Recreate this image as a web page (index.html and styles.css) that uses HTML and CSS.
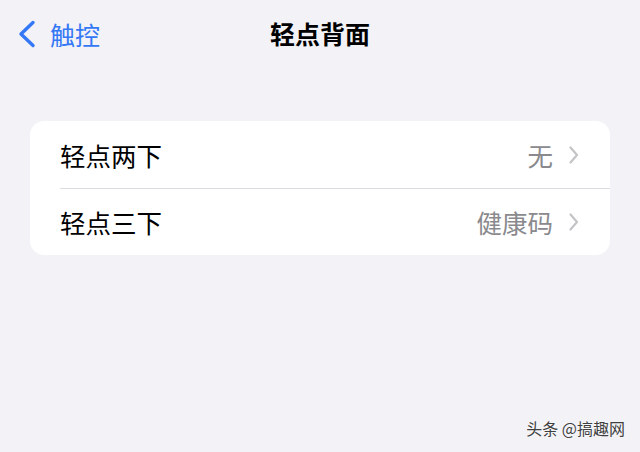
FILE: index.html
```html
<html>
  <head>
    <link rel="stylesheet" href="styles.css">
  </head>
  <body>
    <header class="nav">
      <a class="nav-back">
        <svg class="nav-chevron" width="20" height="28" viewBox="0 0 20 28">
          <path d="M16 2.5 L4 14 L16 25.5" fill="none" stroke="#3478f6" stroke-width="3.4" stroke-linecap="round" stroke-linejoin="round" />
        </svg>
        <span>触控</span>
      </a>
      <h1 class="nav-title">轻点背面</h1>
    </header>

    <ul class="group">
      <li class="row">
        <span class="row-label">轻点两下</span>
        <span class="row-value">无</span>
        <svg class="row-chevron" width="12" height="20" viewBox="0 0 12 20">
          <path d="M2.5 2.5 L9 10 L2.5 17.5" fill="none" stroke="#c4c4c7" stroke-width="2.2" stroke-linecap="round" stroke-linejoin="round" />
        </svg>
      </li>
      <li class="row">
        <span class="row-label">轻点三下</span>
        <span class="row-value">健康码</span>
        <svg class="row-chevron" width="12" height="20" viewBox="0 0 12 20">
          <path d="M2.5 2.5 L9 10 L2.5 17.5" fill="none" stroke="#c4c4c7" stroke-width="2.2" stroke-linecap="round" stroke-linejoin="round" />
        </svg>
      </li>
    </ul>

    <footer class="watermark">头条 @搞趣网</footer>
  </body>
</html>
```

FILE: styles.css
```css
html,
body,
ul,
h1 {
  margin: 0;
  padding: 0;
}
html {
  font-family: "Noto Sans CJK SC", "Noto Sans", sans-serif;
  background: #f2f2f7;
}
body {
  width: 640px;
  height: 452px;
  display: flex;
  flex-direction: column;
  overflow: hidden;
}
ul {
  list-style-type: none;
}
.nav {
  height: 70px;
  display: grid;
  grid-template-columns: 1fr auto 1fr;
  align-items: center;
  padding: 0 0 0 17px;
  box-sizing: border-box;
}
.nav-back {
  display: flex;
  align-items: center;
  gap: 13px;
  color: #3478f6;
  font-size: 25px;
  line-height: 1;
  margin-top: -2px;
}
.nav-title {
  font-size: 25px;
  font-weight: 700;
  color: #000;
  line-height: 1;
  margin-top: -4px;
  margin-left: -17px;
}
.group {
  margin: 51px 30px 0;
  background: #fff;
  border-radius: 14px;
  padding-left: 30px;
}
.row {
  height: 67px;
  display: flex;
  align-items: center;
  font-size: 25.5px;
  line-height: 1;
  padding-right: 30px;
}
.row + .row {
  border-top: 1px solid #dcdce0;
  height: 66px;
}
.row-label {
  flex: 1;
  color: #000;
}
.row-value {
  color: #8a8a8e;
  margin-right: 15px;
}
.watermark {
  margin-top: auto;
  align-self: flex-end;
  margin-right: 15px;
  margin-bottom: 12px;
  font-size: 16px;
  color: #3f3f3f;
  text-shadow: 0 0 2px #fff;
}
```
